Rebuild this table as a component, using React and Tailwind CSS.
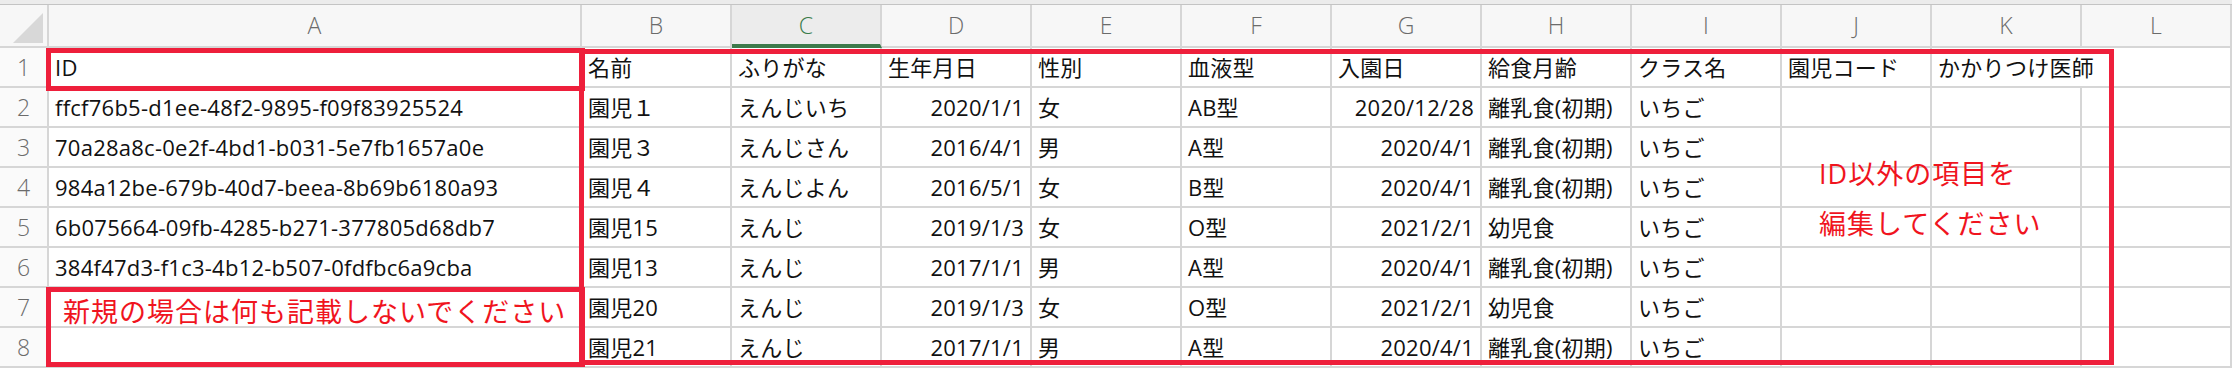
const COLS = ['A', 'B', 'C', 'D', 'E', 'F', 'G', 'H', 'I', 'J', 'K', 'L'];

const ROWS = [
  ['ID', '名前', 'ふりがな', '生年月日', '性別', '血液型', '入園日', '給食月齢', 'クラス名', '園児コード', 'かかりつけ医師', ''],
  ['ffcf76b5-d1ee-48f2-9895-f09f83925524', '園児１', 'えんじいち', '2020/1/1', '女', 'AB型', '2020/12/28', '離乳食(初期)', 'いちご', '', '', ''],
  ['70a28a8c-0e2f-4bd1-b031-5e7fb1657a0e', '園児３', 'えんじさん', '2016/4/1', '男', 'A型', '2020/4/1', '離乳食(初期)', 'いちご', '', '', ''],
  ['984a12be-679b-40d7-beea-8b69b6180a93', '園児４', 'えんじよん', '2016/5/1', '女', 'B型', '2020/4/1', '離乳食(初期)', 'いちご', '', '', ''],
  ['6b075664-09fb-4285-b271-377805d68db7', '園児15', 'えんじ', '2019/1/3', '女', 'O型', '2021/2/1', '幼児食', 'いちご', '', '', ''],
  ['384f47d3-f1c3-4b12-b507-0fdfbc6a9cba', '園児13', 'えんじ', '2017/1/1', '男', 'A型', '2020/4/1', '離乳食(初期)', 'いちご', '', '', ''],
  ['', '園児20', 'えんじ', '2019/1/3', '女', 'O型', '2021/2/1', '幼児食', 'いちご', '', '', ''],
  ['', '園児21', 'えんじ', '2017/1/1', '男', 'A型', '2020/4/1', '離乳食(初期)', 'いちご', '', '', ''],
];

// D and G hold dates, right aligned like Excel
const isDate = (r, c) => r > 0 && (c === 3 || c === 6);

const HeaderRow = () => (
  <>
    <div className="flex h-[43px] items-end justify-end border-r-2 border-b-2 border-[#d6d6d6] bg-[#f7f7f7] pr-[4px] pb-[3px]">
      <svg width="30" height="30" viewBox="0 0 30 30">
        <polygon points="30,0 30,30 0,30" fill="#d8d8d8" />
      </svg>
    </div>
    {COLS.map((c) =>
      c === 'C' ? (
        <div
          key={c}
          className="flex h-[43px] items-center justify-center border-r-2 border-b-[4px] border-r-[#d6d6d6] border-b-[#3d7a4b] bg-[#ececec] pt-[2px] text-[23px] font-light text-[#3a7b4a]"
        >
          {c}
        </div>
      ) : (
        <div
          key={c}
          className="flex h-[43px] items-center justify-center border-r-2 border-b-2 border-[#d6d6d6] bg-[#f7f7f7] text-[23px] font-light text-[#6b6b6b]"
        >
          {c}
        </div>
      )
    )}
  </>
);

const DataRow = ({ cells, r }) => (
  <>
    <div className="flex h-[40px] items-center justify-center border-r-2 border-b-2 border-[#d6d6d6] bg-[#fafafa] text-[23px] font-light text-[#6b6b6b]">
      {r + 1}
    </div>
    {cells.map((v, c) => (
      <div
        key={c}
        className={`flex h-[40px] items-center overflow-visible whitespace-nowrap border-b-2 border-[#d6d6d6] px-[6px] text-[22px] tracking-[0.25px] text-[#111] ${
          isDate(r, c) ? 'justify-end' : 'justify-start'
        } ${r === 0 && c === 10 ? '' : 'border-r-2'}`}
      >
        {v}
      </div>
    ))}
  </>
);

export default function App() {
  return (
    <div className="relative h-[368px] w-[2232px] overflow-hidden bg-white font-['Open_Sans','Noto_Sans_CJK_JP',sans-serif]">
      <div className="h-[5px] border-b border-[#c4c4c4] bg-[#ececec]" />
      <div className="grid grid-cols-[49px_533px_repeat(11,150px)]">
        <HeaderRow />
        {ROWS.map((cells, r) => (
          <DataRow key={r} cells={cells} r={r} />
        ))}
      </div>

      {/* red annotation frames */}
      <div className="absolute left-[46px] top-[48px] h-[43px] w-[539px] border-[5px] border-[#ee1f3b]" />
      <div className="absolute left-[46px] top-[287px] h-[80px] w-[539px] border-[5px] border-[#ee1f3b]">
        <div className="pl-[12px] pt-[3px] text-[27px] leading-[34px] tracking-[1px] text-[#f0141e]">
          新規の場合は何も記載しないでください
        </div>
      </div>
      <div className="absolute left-[579px] top-[49px] h-[316px] w-[1535px] border-[5px] border-[#ee1f3b]" />

      <div className="absolute left-[1819px] top-[149px] text-[27px] leading-[50px] tracking-[1px] text-[#f0141e]">
        <div>ID以外の項目を</div>
        <div>編集してください</div>
      </div>
    </div>
  );
}
